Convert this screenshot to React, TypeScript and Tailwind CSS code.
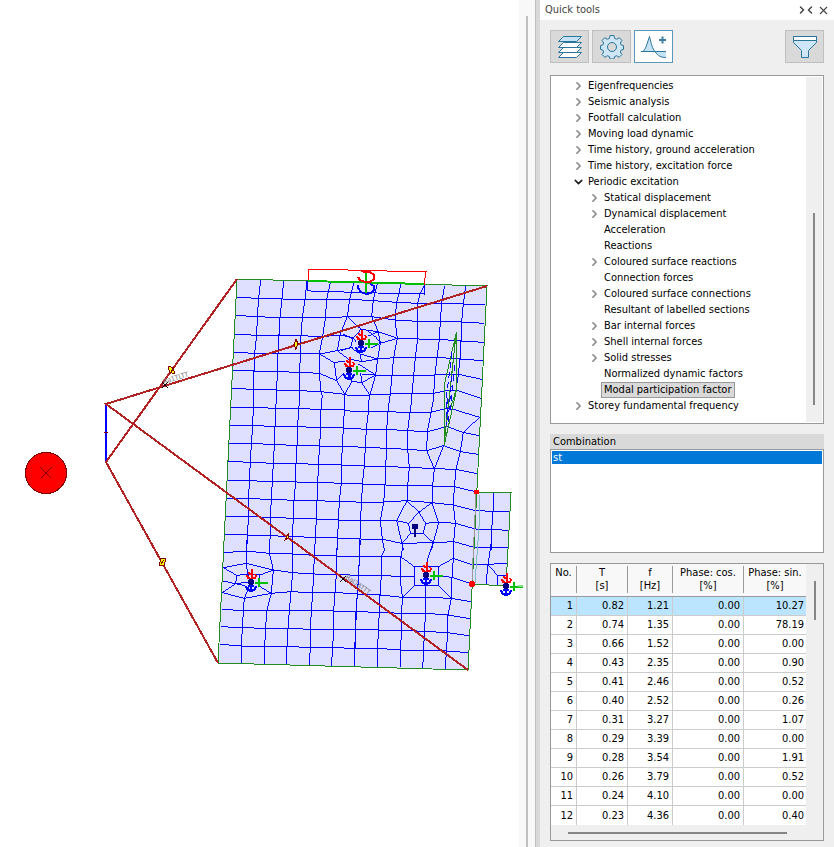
import { ChevronDown, ChevronLeft, ChevronRight, X } from "lucide-react";

const TREE = [
  { label: "Eigenfrequencies", level: 0, arrow: true },
  { label: "Seismic analysis", level: 0, arrow: true },
  { label: "Footfall calculation", level: 0, arrow: true },
  { label: "Moving load dynamic", level: 0, arrow: true },
  { label: "Time history, ground acceleration", level: 0, arrow: true },
  { label: "Time history, excitation force", level: 0, arrow: true },
  { label: "Periodic excitation", level: 0, arrow: true, open: true },
  { label: "Statical displacement", level: 1, arrow: true },
  { label: "Dynamical displacement", level: 1, arrow: true },
  { label: "Acceleration", level: 1 },
  { label: "Reactions", level: 1 },
  { label: "Coloured surface reactions", level: 1, arrow: true },
  { label: "Connection forces", level: 1 },
  { label: "Coloured surface connections", level: 1, arrow: true },
  { label: "Resultant of labelled sections", level: 1 },
  { label: "Bar internal forces", level: 1, arrow: true },
  { label: "Shell internal forces", level: 1, arrow: true },
  { label: "Solid stresses", level: 1, arrow: true },
  { label: "Normalized dynamic factors", level: 1 },
  { label: "Modal participation factor", level: 1, selected: true },
  { label: "Storey fundamental frequency", level: 0, arrow: true },
];

const COLUMNS = [
  { name: "No.", unit: "", width: "w-[26px]" },
  { name: "T", unit: "[s]", width: "w-[51px]" },
  { name: "f", unit: "[Hz]", width: "w-[45px]" },
  { name: "Phase: cos.", unit: "[%]", width: "w-[71px]" },
  { name: "Phase: sin.", unit: "[%]", width: "" },
];

const ROWS = [
  ["1", "0.82", "1.21", "0.00", "10.27"],
  ["2", "0.74", "1.35", "0.00", "78.19"],
  ["3", "0.66", "1.52", "0.00", "0.00"],
  ["4", "0.43", "2.35", "0.00", "0.90"],
  ["5", "0.41", "2.46", "0.00", "0.52"],
  ["6", "0.40", "2.52", "0.00", "0.26"],
  ["7", "0.31", "3.27", "0.00", "1.07"],
  ["8", "0.29", "3.39", "0.00", "0.00"],
  ["9", "0.28", "3.54", "0.00", "1.91"],
  ["10", "0.26", "3.79", "0.00", "0.52"],
  ["11", "0.24", "4.10", "0.00", "0.00"],
  ["12", "0.23", "4.36", "0.00", "0.40"],
];

// mesh polylines, per patch, in thirds of a model unit from the patch origin
const MESH = [
  {
    x: 210,
    y: 260,
    lines: [
      "152,58 146,115 142,170 140,226 134,280 132,333 131,388 131,420",
      "221,62 216,118 210,172 207,225 204,280 203,335 199,390 199,420",
      "291,62 285,118 277,172 273,227 271,282 269,337 267,392 269,420",
      "361,67 355,95 350,118 346,175 338,229 328,282 328,340 333,395 337,410 335,420",
      "432,68 425,95 419,118 412,170 390,225 382,272 421,302",
      "404,403 404,420",
      "78,112 146,115 216,117 285,118 350,120 420,118",
      "75,166 142,170 210,173 277,172 346,174 412,170 420,169",
      "73,222 140,226 207,225 273,227 338,230 390,225",
      "71,277 134,280 204,280 271,282 328,282 382,272",
      "68,331 132,333 203,335 269,337 328,340 380,362",
      "65,385 131,388 199,390 267,392 333,395 404,403 420,407",
      "412,170 453,208",
      "328,282 373,308 404,303",
      "373,308 380,362 404,403",
      "380,362 404,338",
      "390,225 428,233 440,247",
      "382,272 430,262",
    ],
  },
  {
    x: 350,
    y: 260,
    lines: [
      "82,72 70,120 65,170 85,215 91,250 83,297 77,345 60,405 57,420",
      "153,73 140,127 135,180 142,235 131,292 126,346 121,402 118,420",
      "223,77 210,100 203,130 202,183 203,236 196,291 191,346 186,401 185,420",
      "284,77 275,128 271,184 268,238 261,292 255,346 251,400 250,420",
      "347,78 340,131 335,186 333,243 330,297 325,343 318,390 310,420",
      "0,118 70,122 140,127 203,130 275,130 340,132 405,135",
      "0,169 65,170 135,180 202,184 271,184 335,186 402,190",
      "142,235 203,237 268,238 333,243 402,247",
      "83,297 131,293 196,292 261,292 330,297 400,302",
      "77,345 126,347 191,346 255,345 325,343 396,358",
      "0,407 60,405 121,402 186,401 251,400 290,392 318,390 393,415",
      "33,208 85,215 142,235 91,250",
      "33,208 8,237 2,262 30,282 83,297",
      "55,228 85,215",
      "53,212 78,232 91,250 62,264",
      "8,237 -20,222",
      "2,262 -28,272",
      "83,297 35,305 0,297",
      "30,282 35,305",
      "25,312 77,345 35,368 60,405",
      "35,368 32,338",
      "35,368 6,364 -16,403",
      "6,364 0,345",
      "77,345 36,342",
    ],
  },
  {
    x: 210,
    y: 400,
    lines: [
      "131,0 130,22 128,77 124,131 121,187 118,242 116,296 116,345 112,405 109,450",
      "199,0 197,25 195,79 193,133 190,190 187,245 184,298 181,352 181,407 177,450",
      "269,0 266,26 263,80 261,137 258,191 257,246 252,301 250,355 247,410 248,450",
      "335,0 333,28 333,83 328,138 326,193 323,247 321,302 319,357 316,412 314,450",
      "404,0 403,30 400,84 397,140 394,195 394,250 388,305 385,360 383,414 382,450",
      "63,22 130,22 197,25 266,26 333,28 403,30 420,33",
      "60,76 128,77 195,79 263,80 333,83 400,84 420,85",
      "57,130 124,131 193,133 261,137 328,138 397,140 420,140",
      "55,184 121,187 190,190 258,191 326,193 394,195 420,196",
      "53,241 118,242 187,245 257,246 323,247 394,250 420,250",
      "50,295 116,296 184,298 252,301 321,302 388,305 420,305",
      "47,349 116,350 181,352 250,355 319,357 385,360 420,361",
      "44,403 112,405 181,407 247,410 316,412 383,414 420,415",
    ],
  },
  {
    x: 350,
    y: 400,
    lines: [
      "57,0 55,35 49,88 46,142 43,198 37,252 35,307 31,362 30,417 28,450",
      "118,0 114,35 110,88 110,145 107,200 105,255 101,306 91,362 97,418 103,450",
      "185,0 180,38 173,92 173,148 178,202 173,256 171,302 140,362 156,430 160,450",
      "250,0 243,37 232,95 230,152 253,206 248,258 246,308 266,368 250,428 244,450",
      "281,137 253,206",
      "389,52 340,97 331,155 318,208 313,260 310,315 316,370 311,425 311,450",
      "0,33 55,35 114,35 180,38 243,37 290,25 310,28 389,52",
      "0,85 49,88 110,88 173,92 232,95 290,80 340,97 387,107",
      "0,140 46,142 110,145 173,148 230,152 281,137 331,155 384,163",
      "0,196 43,198 107,200 178,202 253,206 318,208 381,221",
      "0,250 37,252 105,255 173,256 248,258 313,260 380,276",
      "0,305 35,307 101,306 171,302 246,308 310,315 377,332 430,334 478,334",
      "0,361 31,362 91,362 140,362 175,370 182,400 156,430",
      "171,302 207,337 246,308",
      "175,370 207,337 227,370 220,400 250,428",
      "182,400 220,400",
      "227,370 266,366 316,370 375,387 425,388 473,391",
      "0,415 30,417 97,418 156,430 250,428 311,425 373,442 424,442 475,443",
      "431,280 429,334 425,388 424,442 425,450",
    ],
  },
  {
    x: 210,
    y: 540,
    lines: [
      "112,0 109,35 109,70 113,103 123,125 103,175 100,213 97,264 94,318 93,370",
      "177,30 178,40 190,90 184,160 170,213 167,265 164,319 163,371",
      "248,30 248,98 243,155 238,211 234,265 231,320 229,373",
      "314,30 313,46 311,102 308,158 304,213 301,268 301,322 298,376",
      "448,0 448,48 446,105 442,160 439,213 437,268 434,325 432,378",
      "382,0 380,48 379,103 375,158 371,213 371,270 368,322 364,378",
      "42,38 109,33 178,40 248,42 313,46 380,48 420,50",
      "40,83 109,70 190,90 248,98 311,102 379,103 420,105",
      "37,158 103,175 184,160 243,155 308,158 375,158 420,160",
      "35,207 100,213 170,213 238,211 304,213 371,213 420,214",
      "32,260 97,263 167,265 234,265 301,268 371,270 420,269",
      "30,313 94,318 164,319 231,320 301,322 368,322 420,325",
      "40,83 80,106 113,103 150,105 190,90",
      "38,123 77,131 123,125",
      "80,106 77,131 37,158",
      "77,131 105,137",
      "145,137 184,160",
      "150,105 145,137",
    ],
  },
  {
    x: 350,
    y: 540,
    lines: [
      "31,0 28,50 26,106 22,162 18,215 17,269 15,325 13,380",
      "103,30 94,50 94,107 90,165 88,217 85,270 83,325 82,380",
      "158,20 153,51 150,110 157,172 155,220 154,271 152,330 151,382",
      "252,0 235,50 228,80",
      "228,137 228,172 227,220 223,274 221,332 218,385",
      "310,0 310,55 306,112 304,175 294,225 293,278 289,333 286,386",
      "0,50 28,50 94,49 153,51 193,80 265,80 310,55 368,75 414,73 472,70",
      "0,105 26,106 94,107 150,109 193,108",
      "265,107 306,112 365,132",
      "0,160 22,162 90,165 157,172 228,172 304,175 363,185",
      "0,214 18,215 88,217 155,220 227,220 294,225 360,236",
      "0,269 85,270 154,271 223,274 293,278 357,287",
      "0,325 83,325 152,330 221,332 289,333 357,338",
      "193,80 193,137 265,137 265,80",
      "193,137 157,172",
      "265,137 304,175",
      "425,0 414,73 408,132",
      "414,73 443,107 472,107",
      "443,107 443,135",
    ],
  },
];

const SUPPORTS = [
  { x: 361, y: 343 },
  { x: 349, y: 370 },
  { x: 251, y: 582 },
  { x: 426, y: 575 },
  { x: 506, y: 586 },
];

function Support({ x, y }: { x: number; y: number }) {
  return (
    <g transform={`translate(${x} ${y})`} fill="none" strokeWidth={2}>
      <path d="M4 1h13M8 -4v9" stroke="#00c000" />
      <path d="M1 -13v9M-4 -7l1 3l3 1l4 -1l1 -2l-1 -2M-3 -9l3 1" stroke="#f00" />
      <path d="M0 2v8M-5 4l1 3l3 2h2l3 -2l1 -3M-3 4h6" stroke="#00f" />
      <circle r={3} fill="#000080" />
    </g>
  );
}

function Cross({ x, y, r, color }: { x: number; y: number; r: number; color: string }) {
  return <path d={`M${x - r} ${y - r}l${2 * r} ${2 * r}m0 ${-2 * r}l${-2 * r} ${2 * r}`} stroke={color} fill="none" />;
}

function ModelView() {
  return (
    <svg viewBox="0 0 519 847" className="block w-full overflow-visible" shapeRendering="crispEdges" role="img" aria-label="Finite element model">
      <path d="M237 279L487 286L468 670L218 663Z" fill="#dfdfff" />
      <path d="M477 492L511 493L506 586L472 584Z" fill="#dfdfff" />

      {MESH.map((p) => (
        <g key={`${p.x}-${p.y}`} transform={`translate(${p.x} ${p.y}) scale(0.33333)`} fill="none" stroke="#00f" strokeWidth={3}>
          {p.lines.map((pts) => (
            <polyline key={pts} points={pts} />
          ))}
        </g>
      ))}

      <g fill="none" stroke="#228b22">
        <path d="M237 279L487 286L468 670L218 663Z" />
        <path d="M477 492L511 493L506 586L472 584" />
        <path d="M456.500 332V390L444 446V386Z" />
        <path d="M456 334L444 446M456 334L449 402L447 412M456 390L450 410" />
      </g>
      <path d="M452 352L446 400L446 425M455 365L450 410M452 376L448 422M447 398V420" stroke="#00f" fill="none" strokeDasharray="6 4" />
      <path d="M476 494L472 580" stroke="#999" fill="none" />
      <path d="M479 495V527L475 583" stroke="#7fbfbf" fill="none" />

      {/* edge hinge at the top */}
      <g fill="none">
        <path d="M308 281V269L426 272L424 285" stroke="#f00" />
        <path d="M307 281V290L311 291L377 293L424 294V285" stroke="#00f" />
        <path d="M308 281L424 284M366 272V293" stroke="#00c000" strokeWidth={2} />
        <path d="M358 277l2 3l5 2h5l4 -3v-4l-4 -3h-4l-5 -1" stroke="#f00" strokeWidth={2} />
        <path d="M358 285v3l3 4l5 2l5 -1l3 -3v-4l-4 -2" stroke="#00f" strokeWidth={2} />
      </g>

      {/* bars */}
      <path d="M106 404V461" stroke="#00f" strokeWidth={2} />
      <path d="M104 432.500h4" stroke="#800000" />
      <g stroke="#b22222" strokeWidth={2} fill="none">
        <path d="M237 279L106 462L218 663" />
        <path d="M487 286L106 404L468 670" />
      </g>
      <g fill="#ff0" stroke="#800000">
        <path d="M168.500 366.500l5 1l1 6l-5 -1zM171 373l2 -5" />
        <path d="M160.500 558.500l5 0l-1 7l-5 0zM161 564l3 -4" />
        <path d="M296 339.500l2 4l-2 6l-2 -5z" />
        <path d="M289 533l-2 3l-2 4l3 -2z" />
      </g>
      <g fontFamily="'DejaVu Sans Condensed', 'DejaVu Sans', sans-serif" fontSize={7} fill="#777">
        <text transform="translate(164 384) rotate(-17)">Ra1TLTT</text>
        <text transform="translate(345 578) rotate(36)">RaLTATTT</text>
      </g>
      <Cross x={165} y={385} r={3} color="#000" />
      <Cross x={343} y={579} r={3} color="#000" />

      {SUPPORTS.map((s) => (
        <Support key={s.x} x={s.x} y={s.y} />
      ))}
      <path d="M518 586h5" stroke="#80df80" strokeWidth={2} />
      <path d="M415 528v9" stroke="#000080" strokeWidth={2} />
      <rect x={412} y={524} width={6} height={5} fill="#000080" />
      <circle cx={476.500} cy={492} r={2.500} fill="#f00" />
      <circle cx={472} cy={584} r={3} fill="#f00" />

      <circle cx={46} cy={473} r={20.500} fill="#f00" stroke="#800000" />
      <Cross x={46} y={473} r={5.500} color="#800000" />
    </svg>
  );
}

function LayersIcon() {
  return (
    <svg width={26} height={24} viewBox="0 0 26 24" fill="#fff" stroke="#2a759b">
      <path d="M6.500 17.500h18l-5 5h-18z" />
      <path d="M6.500 12.500h18l-5 5h-18z" />
      <path d="M6.500 7.500h18l-5 5h-18z" />
      <path d="M6.500 1.500h18l-5 5h-18z" fill="#c6e3f5" />
    </svg>
  );
}

function GearIcon() {
  return (
    <svg width={24} height={24} viewBox="0 0 24 24" fill="#cfe6f6" stroke="#2a759b" strokeLinejoin="round">
      <path d="M10 1.500h4l.6 2.900 2 .9 2.600-1.600 2.700 2.700-1.500 2.600.8 2 2.300.6v3.800l-2.300.6-.8 2 1.500 2.600-2.700 2.700-2.600-1.600-2 .9-.6 2.400h-4l-.6-2.400-2-.9-2.600 1.600-2.700-2.700 1.500-2.600-.8-2-2.300-.6v-3.800l2.300-.6.8-2-1.500-2.600 2.700-2.700 2.600 1.600 2-.9z" transform="translate(0 -1)" />
      <circle cx={12} cy={12} r={4.500} fill="#d9d9d9" />
    </svg>
  );
}

function SpectrumIcon() {
  return (
    <svg width={28} height={26} viewBox="0 0 28 26" fill="none" stroke="#2a759b">
      <path d="M3 17.500C6 15 7.500 8 9.500 2.500C11 9 12.500 15 15 17.500z" fill="#c6e3f5" />
      <path d="M15 17.500C18 22 21 23.500 26 23.500V17.500z" fill="#c6e3f5" stroke="none" />
      <path d="M15 17.500C18 22 21 23.500 26 23.500" />
      <path d="M1 17.500h25" />
      <path d="M19 6h7M22.500 2.500v7" strokeWidth={2} stroke="#3f7f9f" />
    </svg>
  );
}

function FilterIcon() {
  return (
    <svg width={24} height={24} viewBox="0 0 24 24" fill="#cfe6f6" stroke="#2a759b">
      <path d="M.500 1.500h23v6l-8 8v7h-7v-7l-8-8z" />
      <path d="M.500 1.500h23v4h-23z" fill="#fff" />
    </svg>
  );
}

const TOOLS = [
  { name: "Layers", Icon: LayersIcon, active: false },
  { name: "Settings", Icon: GearIcon, active: false },
  { name: "Dynamic results", Icon: SpectrumIcon, active: true },
];

function Toolbar() {
  return (
    <div className="flex items-center gap-[3px] mt-2.5">
      {TOOLS.map(({ name, Icon, active }) => (
        <button
          key={name}
          aria-label={name}
          className={`w-[39px] h-[33px] border flex items-center justify-center ${active ? "bg-white border-[#5b98ba]" : "bg-[#d9d9d9] border-[#bfbfbf]"}`}
        >
          <Icon />
        </button>
      ))}
      <button aria-label="Filter" className="ml-auto w-[39px] h-[33px] border flex items-center justify-center bg-[#d9d9d9] border-[#bfbfbf]">
        <FilterIcon />
      </button>
    </div>
  );
}

function ResultTree() {
  return (
    <div className="flex mt-3 border border-[#999] bg-white">
      <ul className="flex-1 min-w-0 pt-0.5 pb-[9px]">
        {TREE.map((t) => (
          <li key={t.label} className={`flex items-center h-4 ${t.level ? "pl-[37px]" : "pl-[21px]"}`}>
            <span className="w-[13px] flex items-center justify-center">
              {t.arrow && (t.open ? <ChevronDown size={14} strokeWidth={3} color="#222" /> : <ChevronRight size={14} strokeWidth={3} color="#888" />)}
            </span>
            <button
              className={`h-4 leading-[14px] px-[2px] border whitespace-nowrap ${t.selected ? "bg-[#d9d9d9] border-[#999]" : "border-transparent"}`}
            >
              {t.label}
            </button>
          </li>
        ))}
      </ul>
      <div className="w-4 my-px mr-px bg-[#efefef] flex flex-col items-center">
        <div className="mt-[136px] w-0.5 h-48 bg-[#868686]" />
      </div>
    </div>
  );
}

function Combination() {
  return (
    <section className="mt-2.5">
      <h2 className="h-[15px] leading-[15px] pl-[3px] bg-[#d9d9d9]">Combination</h2>
      <ul className="h-[104px] border border-[#999] bg-white p-px">
        <li>
          <button className="block w-full h-[13px] leading-[13px] pl-px text-left text-white bg-[#0078d7]">st</button>
        </li>
      </ul>
    </section>
  );
}

function ModesTable() {
  return (
    <div className="mt-2.5 border border-[#999] bg-[#efefef]">
      <div className="flex">
        <table className="flex-1 table-fixed border-separate border-spacing-0 bg-white">
          <thead>
            <tr className="h-[33px] bg-[#f8f8f8]">
              {COLUMNS.map((c, i) => (
                <th key={c.name} className={`${c.width} p-0 pt-0.5 pb-[3px] border-b border-[#999] font-normal align-top`}>
                  <div className={`h-[27px] leading-[13px] whitespace-nowrap ${i < 4 ? "border-r border-[#999]" : ""}`}>
                    {c.name}
                    <br />
                    {c.unit}
                  </div>
                </th>
              ))}
            </tr>
          </thead>
          <tbody>
            {ROWS.map((r, i) => (
              <tr key={r[0]} className={i === 0 ? "bg-[#bbe5ff]" : "bg-white"}>
                {r.map((v, j) => (
                  <td
                    key={j}
                    className={`h-[19px] p-0 text-right leading-[18px] border-[#ccc] ${j < 4 ? "border-r pr-[3px]" : "pr-0.5"} ${i < 11 ? "border-b" : ""}`}
                  >
                    {v}
                  </td>
                ))}
              </tr>
            ))}
          </tbody>
        </table>
        <div className="w-[17px] flex justify-center">
          <div className="mt-[17px] w-0.5 h-[39px] bg-[#868686]" />
        </div>
      </div>
      <div className="h-[15px] pt-[7px] pl-[17px] pr-9">
        <div className="h-0.5 bg-[#868686]" />
      </div>
    </div>
  );
}

function QuickTools() {
  return (
    <aside className="w-[294px] shrink-0 bg-[#efefef]">
      <header className="h-5 bg-white flex items-center pl-[5px] pr-1 text-[#444]">
        <h1>Quick tools</h1>
        <button aria-label="Collapse" className="ml-auto flex items-center">
          <ChevronRight size={12} strokeWidth={3} className="-mr-1" />
          <ChevronLeft size={12} strokeWidth={3} />
        </button>
        <button aria-label="Close" className="ml-px">
          <X size={13} strokeWidth={2} />
        </button>
      </header>
      <div className="px-2.5 pb-1.5">
        <Toolbar />
        <ResultTree />
        <Combination />
        <ModesTable />
      </div>
    </aside>
  );
}

export default function App() {
  return (
    <div className="flex min-h-screen bg-white text-black text-[11px] font-['DejaVu_Sans_Condensed','DejaVu_Sans',sans-serif]">
      <main className="relative flex-1 min-w-0">
        <ModelView />
      </main>
      <div className="w-4 shrink-0 bg-[#f8f8f8] pt-4 pl-[7px] flex">
        <div className="w-0.5 bg-[#bfbfbf]" />
      </div>
      <div className="w-[5px] shrink-0 bg-[#d9d9d9] border-l border-[#bfbfbf]" />
      <QuickTools />
    </div>
  );
}
